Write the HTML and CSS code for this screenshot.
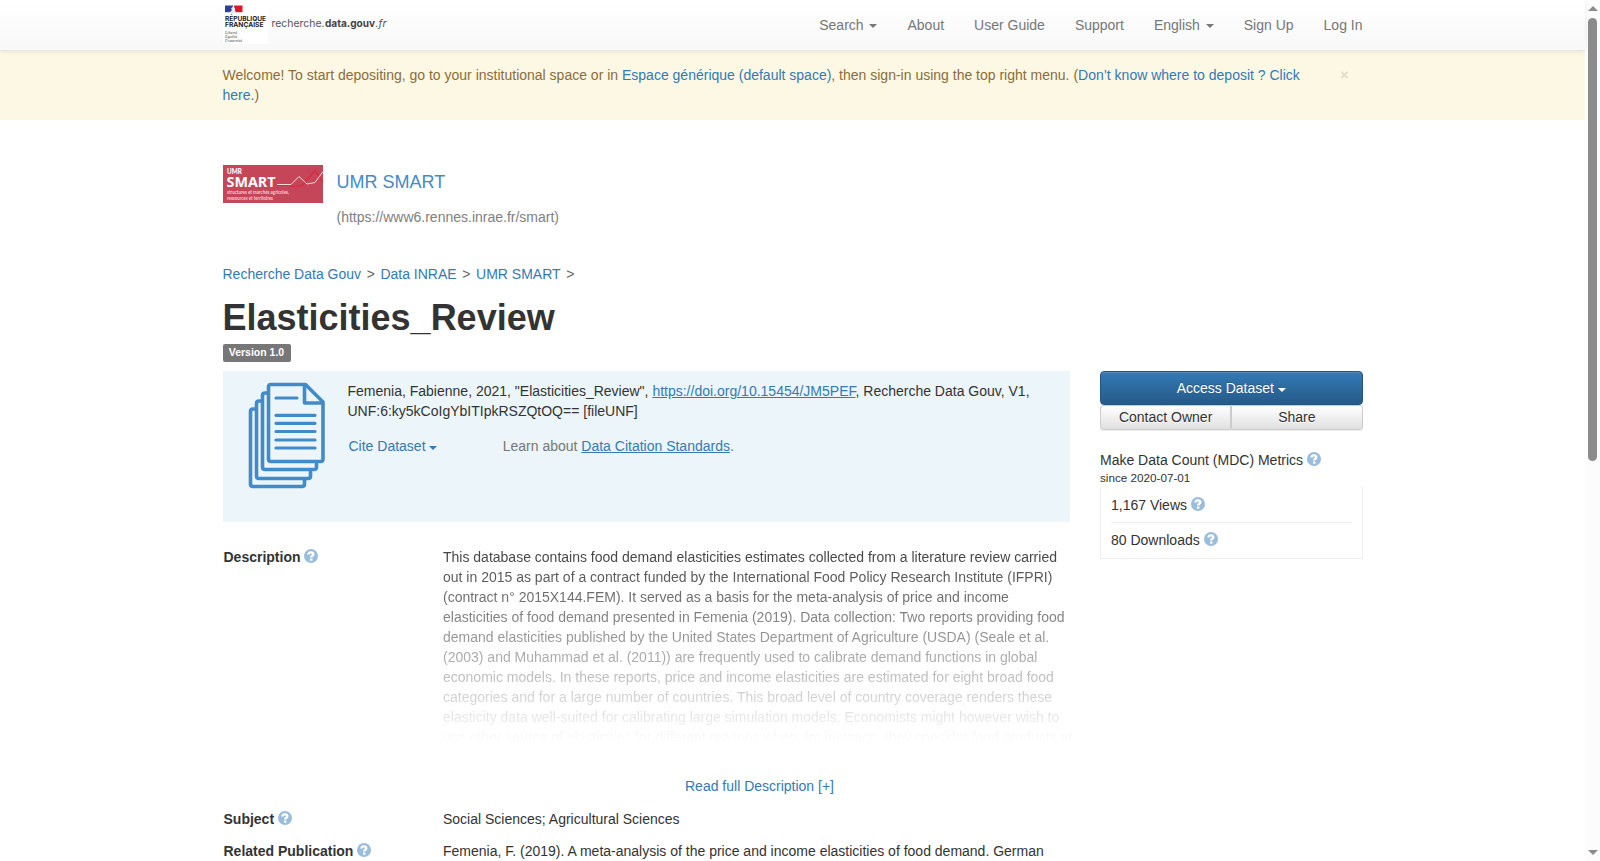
FILE: index.html
```html
<!DOCTYPE html>
<html lang="en">
<head>
    <meta charset="UTF-8">
    <meta name="viewport" content="width=device-width, initial-scale=1.0">
    <title>Elasticities_Review - UMR SMART</title>
    <link rel="stylesheet" href="styles.css">
</head>
<body>
    <svg class="symbols" width="0" height="0">
        <symbol id="question" viewBox="0 0 14 14">
            <circle cx="7" cy="7" r="7" fill="#9abddb"/>
            <path d="M4.5 5.6C4.5 2.7 9.3 2.7 9.3 5.2C9.3 6.8 7.2 6.6 7.2 8.5" fill="none" stroke="#fff" stroke-width="2.4"/>
            <rect x="6" y="9.5" width="2.4" height="2.2" fill="#fff"/>
        </symbol>
    </svg>

    <div class="page">
        <nav class="navbar">
            <div class="container nav-inner">
                <a href="#" class="brand">
                    <svg width="170" height="44" viewBox="0 0 170 44">
                        <rect x="0" y="4" width="45" height="40" fill="#fff"/>
                        <rect x="2" y="5.5" width="8" height="6.7" fill="#2f3f91"/>
                        <rect x="11" y="5.5" width="8.5" height="6.7" fill="#e1142c"/>
                        <path d="M8 8.5l2-2 2 1.5v2.5l1 1.5H7l2-2z" fill="#e4e7f0"/>
                        <text x="2" y="20.8" class="gov" textLength="41" lengthAdjust="spacingAndGlyphs">RÉPUBLIQUE</text>
                        <text x="2" y="27.3" class="gov" textLength="38.5" lengthAdjust="spacingAndGlyphs">FRANÇAISE</text>
                        <text x="2" y="33.8" class="motto" textLength="12" lengthAdjust="spacingAndGlyphs">Liberté</text>
                        <text x="2" y="38.1" class="motto" textLength="12" lengthAdjust="spacingAndGlyphs">Égalité</text>
                        <text x="2" y="42.3" class="motto" textLength="17" lengthAdjust="spacingAndGlyphs">Fraternité</text>
                        <text x="48.5" y="27" class="site" textLength="53" lengthAdjust="spacingAndGlyphs">recherche.</text>
                        <text x="102" y="27" class="site site-bold" textLength="50" lengthAdjust="spacingAndGlyphs">data.gouv</text>
                        <text x="152.5" y="27" class="site site-italic" textLength="11" lengthAdjust="spacingAndGlyphs">.fr</text>
                    </svg>
                </a>
                <div class="nav-links">
                    <a href="#">Search <b class="caret"></b></a>
                    <a href="#">About</a>
                    <a href="#">User Guide</a>
                    <a href="#">Support</a>
                    <a href="#">English <b class="caret"></b></a>
                    <a href="#">Sign Up</a>
                    <a href="#">Log In</a>
                </div>
            </div>
        </nav>

        <div class="alert">
            <div class="container alert-inner">
                <div class="alert-text">Welcome! To start depositing, go to your institutional space or in <a href="#">Espace générique (default space)</a>, then sign-in using the top right menu. (<a href="#">Don’t know where to deposit ? Click here.</a>)</div>
                <button class="close">×</button>
            </div>
        </div>

        <main class="container">
            <div class="dataverse-header">
                <svg class="dataverse-logo" width="100" height="38" viewBox="0 0 100 38">
                    <rect width="100" height="38" fill="#c54659"/>
                    <text x="4" y="9" class="logo-umr" textLength="15" lengthAdjust="spacingAndGlyphs">UMR</text>
                    <text x="3.5" y="21.8" class="logo-smart" textLength="49" lengthAdjust="spacingAndGlyphs">SMART</text>
                    <text x="4" y="29.3" class="logo-small" textLength="62" lengthAdjust="spacingAndGlyphs">structures et marchés agricoles,</text>
                    <text x="4" y="34.5" class="logo-small" textLength="46" lengthAdjust="spacingAndGlyphs">ressources et territoires</text>
                    <path d="M54 20.5h12l4 1 9-1 13-15 8 12" fill="none" stroke="#e2263c" stroke-width="1.2"/>
                    <path d="M54 19.5h14l8-8 8 7.5 8-1.5 8-11" fill="none" stroke="#fbe6e8" stroke-width="0.9"/>
                </svg>
                <div>
                    <a href="#" class="dataverse-name">UMR SMART</a>
                    <div class="dataverse-url">(https://www6.rennes.inrae.fr/smart)</div>
                </div>
            </div>

            <div class="breadcrumb">
                <a href="#">Recherche Data Gouv</a><span>&gt;</span><a href="#">Data INRAE</a><span>&gt;</span><a href="#">UMR SMART</a><span>&gt;</span>
            </div>

            <h1>Elasticities_Review</h1>
            <div class="version-row"><span class="version">Version 1.0</span></div>

            <div class="columns">
                <div class="main-col">
                    <div class="citation">
                        <svg class="files-icon" width="79" height="108" viewBox="0 0 79 108" fill="none" stroke="#428bca" stroke-width="3.6" stroke-linejoin="round" stroke-linecap="round">
                            <path d="M8 27H5q-2.5 0-2.5 2.5V102q0 2.5 2.5 2.5H54q2.5 0 2.5-2.5V98"/>
                            <path d="M14 19H11q-2.5 0-2.5 2.5V94q0 2.5 2.5 2.5H60q2.5 0 2.5-2.5V90"/>
                            <path d="M20 11H17q-2.5 0-2.5 2.5V85q0 2.5 2.5 2.5H66q2.5 0 2.5-2.5V82"/>
                            <path d="M57.5 2.5H23q-2.5 0-2.5 2.5V77q0 2.5 2.5 2.5H72.5q2.5 0 2.5-2.5V20Z"/>
                            <path d="M56.5 3V21H74"/>
                            <path d="M28 16H49M28 33.3H67M28 41.3H67M28 49.5H67M28 58H67M28 66H67" stroke-width="3.2"/>
                        </svg>
                        <div>
                            <div class="cite-text">Femenia, Fabienne, 2021, "Elasticities_Review", <a href="#">https://doi.org/10.15454/JM5PEF</a>, Recherche Data Gouv, V1, UNF:6:ky5kCoIgYbITIpkRSZQtOQ== [fileUNF]</div>
                            <div class="cite-actions">
                                <a href="#" class="cite-btn">Cite Dataset <b class="caret"></b></a>
                                <span class="learn">Learn about <a href="#">Data Citation Standards</a>.</span>
                            </div>
                        </div>
                    </div>

                    <div class="field">
                        <div class="field-label">Description <svg class="help"><use href="#question"/></svg></div>
                        <div class="field-value">
                            <div class="description">This database contains food demand elasticities estimates collected from a literature review carried out in 2015 as part of a contract funded by the International Food Policy Research Institute (IFPRI) (contract n° 2015X144.FEM). It served as a basis for the meta-analysis of price and income elasticities of food demand presented in Femenia (2019). Data collection: Two reports providing food demand elasticities published by the United States Department of Agriculture (USDA) (Seale et al. (2003) and Muhammad et al. (2011)) are frequently used to calibrate demand functions in global economic models. In these reports, price and income elasticities are estimated for eight broad food categories and for a large number of countries. This broad level of country coverage renders these elasticity data well-suited for calibrating large simulation models. Economists might however wish to use other source of elasticities for different reasons when, for instance, they consider food products at</div>
                            <a href="#" class="read-more">Read full Description [+]</a>
                        </div>
                    </div>
                    <div class="field">
                        <div class="field-label">Subject <svg class="help"><use href="#question"/></svg></div>
                        <div class="field-value">Social Sciences; Agricultural Sciences</div>
                    </div>
                    <div class="field">
                        <div class="field-label">Related Publication <svg class="help"><use href="#question"/></svg></div>
                        <div class="field-value">Femenia, F. (2019). A meta-analysis of the price and income elasticities of food demand. German</div>
                    </div>
                </div>

                <aside class="side-col">
                    <button class="btn-access">Access Dataset <b class="caret"></b></button>
                    <div class="btn-row">
                        <button>Contact Owner</button>
                        <button>Share</button>
                    </div>
                    <div class="metrics-title">Make Data Count (MDC) Metrics <svg class="help"><use href="#question"/></svg></div>
                    <div class="metrics-since">since 2020-07-01</div>
                    <div class="metrics">
                        <div class="metric">1,167 Views <svg class="help"><use href="#question"/></svg></div>
                        <div class="metric">80 Downloads <svg class="help"><use href="#question"/></svg></div>
                    </div>
                </aside>
            </div>
        </main>
    </div>

    <div class="scrollbar">
        <span class="arrow-up"></span>
        <span class="thumb"></span>
        <span class="arrow-down"></span>
    </div>
</body>
</html>
```

FILE: styles.css
```css
* {
    box-sizing: border-box;
}

body {
    margin: 0;
    height: 861px;
    display: flex;
    overflow: hidden;
    font-family: "Liberation Sans", Arial, sans-serif;
    font-size: 14px;
    line-height: 20px;
    color: #333;
    background: #fff;
}

a {
    color: #337ab7;
    text-decoration: none;
}

button {
    font-family: inherit;
    font-size: 14px;
    cursor: pointer;
}

.symbols {
    position: absolute;
}

.page {
    flex: 1;
    min-width: 0;
}

.container {
    width: 1140px;
    margin: 0 auto;
}

.caret {
    display: inline-block;
    vertical-align: middle;
    border-top: 4px solid;
    border-left: 4px solid transparent;
    border-right: 4px solid transparent;
}

.columns .caret {
    position: relative;
    top: 1px;
}

.help {
    width: 14px;
    height: 14px;
    vertical-align: -1px;
}

/* navbar */
.navbar {
    position: relative;
    height: 51px;
    border-bottom: 1px solid #e7e7e7;
    background: linear-gradient(to bottom, #fff 0%, #f8f8f8 100%);
    box-shadow: 0 1px 5px rgba(0, 0, 0, 0.075);
}

.nav-inner {
    display: flex;
    justify-content: space-between;
}

.brand {
    height: 44px;
}

.gov {
    font: bold 6.5px Inter, sans-serif;
    fill: #222;
}

.motto {
    font: italic 4.6px "Liberation Serif", serif;
    fill: #444;
}

.site {
    font: 10.5px Inter, sans-serif;
    fill: #555;
}

.site-bold {
    font-weight: 700;
    fill: #444;
}

.site-italic {
    font-style: italic;
}

.nav-links {
    display: flex;
    gap: 30px;
    padding-top: 15px;
}

.nav-links a {
    color: #777;
}

.nav-links .caret {
    margin-left: 2px;
}

/* welcome message */
.alert {
    height: 69px;
    padding-top: 14px;
    background: #fcf8e3;
    color: #8a6d3b;
}

.alert-inner {
    display: flex;
    justify-content: space-between;
    align-items: flex-start;
}

.alert-text {
    width: 1090px;
}

.close {
    margin-right: 14px;
    padding: 0;
    border: none;
    background: none;
    color: #e1ddc8;
    font-weight: bold;
    line-height: 20px;
}

/* dataverse header */
.dataverse-header {
    display: flex;
    gap: 14px;
    margin-top: 45px;
    height: 99px;
}

.logo-umr {
    font: 900 6.5px Lato, sans-serif;
    fill: #fff;
}

.logo-smart {
    font: bold 14px "Open Sans", sans-serif;
    fill: #fff;
}

.logo-small {
    font: bold 4.6px Lato, sans-serif;
    fill: #f3cfd4;
}

.dataverse-name {
    display: block;
    margin-top: 7px;
    font-size: 18px;
    color: #428bca;
}

.dataverse-url {
    margin-top: 15px;
    color: #808080;
}

.breadcrumb span {
    margin: 0 5.6px;
    color: #666;
}

h1 {
    margin: 14px 0 0;
    font-size: 36px;
    line-height: 40px;
}

.version-row {
    height: 33px;
    padding-top: 6px;
}

.version {
    display: block;
    width: 68px;
    height: 18px;
    border-radius: 2px;
    background: #777;
    color: #fff;
    font-size: 10.5px;
    font-weight: bold;
    line-height: 17px;
    text-align: center;
}

.columns {
    display: flex;
    justify-content: space-between;
}

.main-col {
    width: 847.5px;
}

.side-col {
    width: 262.5px;
}

/* citation block */
.citation {
    display: flex;
    gap: 21px;
    height: 151px;
    margin-bottom: 25px;
    padding: 10px 25px;
    background: #ecf5fa;
}

.files-icon {
    flex: none;
    margin-top: 1px;
}

.cite-text a,
.learn a {
    text-decoration: underline;
}

.cite-actions {
    display: flex;
    margin: 15px 0 0 1px;
}

.cite-btn {
    width: 154.2px;
}

.learn {
    color: #777;
}

/* metadata */
.field {
    display: flex;
    margin-bottom: 12px;
    padding-left: 1px;
}

.field-label {
    flex: none;
    width: 219.5px;
    font-weight: bold;
}

.field-value {
    flex: none;
    width: 633px;
}

.description {
    height: 195px;
    overflow: hidden;
    -webkit-mask-image: linear-gradient(to bottom, rgba(0, 0, 0, 0.95), rgba(0, 0, 0, 0));
    mask-image: linear-gradient(to bottom, rgba(0, 0, 0, 0.95), rgba(0, 0, 0, 0));
}

.read-more {
    display: block;
    margin: 34px 0 1px;
    text-align: center;
}

/* right column */
.btn-access {
    display: block;
    width: 100%;
    height: 34px;
    border: 1px solid #245580;
    border-radius: 4px;
    background: linear-gradient(to bottom, #337ab7 0%, #265a88 100%);
    box-shadow: inset 0 1px 0 rgba(255, 255, 255, 0.15), 0 1px 1px rgba(0, 0, 0, 0.075);
    color: #fff;
    text-shadow: 0 -1px 0 rgba(0, 0, 0, 0.2);
}

.btn-row {
    display: flex;
    margin-bottom: 20px;
}

.btn-row button {
    flex: 1;
    height: 25px;
    padding: 0 0 2px;
    border: 1px solid #ccc;
    background: linear-gradient(to bottom, #fff 0%, #e0e0e0 100%);
    box-shadow: inset 0 1px 0 rgba(255, 255, 255, 0.15), 0 1px 1px rgba(0, 0, 0, 0.075);
    color: #333;
    text-shadow: 0 1px 0 #fff;
}

.btn-row button:first-child {
    border-radius: 3px 0 0 3px;
}

.btn-row button:last-child {
    border-radius: 0 3px 3px 0;
}

.metrics-since {
    height: 17px;
    font-size: 11.7px;
    line-height: 15px;
}

.metrics {
    height: 72px;
    padding: 0 10px;
    border: 1px solid #eee;
    border-top: none;
}

.metric {
    height: 35px;
    padding-top: 7px;
}

.metric:first-child {
    height: 36px;
    padding-top: 8px;
    border-bottom: 1px solid #eee;
}

/* window scrollbar */
.scrollbar {
    display: flex;
    flex-direction: column;
    align-items: center;
    width: 15px;
    height: 861px;
    padding: 6px 0;
    background: #fcfcfc;
}

.arrow-up,
.arrow-down {
    border-left: 5px solid transparent;
    border-right: 5px solid transparent;
}

.arrow-up {
    border-bottom: 5px solid #8b8b8b;
}

.arrow-down {
    margin-top: auto;
    border-top: 5px solid #8b8b8b;
}

.thumb {
    width: 9px;
    height: 443px;
    margin-top: 7px;
    border-radius: 5px;
    background: #8b8b8b;
}
```
